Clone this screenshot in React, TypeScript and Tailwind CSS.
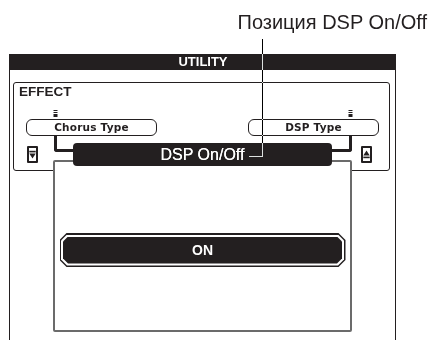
import React from "react";

function Indicator() {
  return (
    <svg width="5" height="7" viewBox="0 0 5 7" className="block">
      <rect x="0.5" y="0" width="4" height="1" fill="#231f20" />
      <rect x="0.5" y="2" width="4" height="1" fill="#231f20" />
      <rect x="0.5" y="4" width="4" height="3" fill="#231f20" />
    </svg>
  );
}

function ScrollButton({ up }: { up?: boolean }) {
  return (
    <div className="mt-[10px] w-[11px] h-[17px] border-2 border-[#231f20] rounded-[1px] flex items-center justify-center">
      <svg width="7" height="13" viewBox="0 0 7 13" className="block">
        {up ? (
          <>
            <polygon points="3.5,2.5 0.3,7.5 6.7,7.5" fill="#231f20" />
            <rect x="0.3" y="8.6" width="6.4" height="1.6" fill="#231f20" />
          </>
        ) : (
          <>
            <rect x="0.3" y="2.8" width="6.4" height="1.6" fill="#231f20" />
            <polygon points="0.3,5.5 6.7,5.5 3.5,10.5" fill="#231f20" />
          </>
        )}
      </svg>
    </div>
  );
}

function Pill({ label }: { label: string }) {
  return (
    <div className="mt-[2px] w-[131px] h-[17px] border-[1.5px] border-[#231f20] rounded-[6px] flex items-center justify-center text-[10.5px] leading-[11px] font-bold font-['DejaVu_Sans',sans-serif] tracking-[0.2px] text-[#231f20]">
      {label}
    </div>
  );
}

export default function App() {
  return (
    <div className="relative w-[434px] h-[340px] overflow-hidden bg-white text-[#231f20] font-['Liberation_Sans',Arial,sans-serif]">
      <div className="h-[54px] pt-[10px] pr-[7px] text-right text-[20px] leading-[24px]">
        Позиция DSP On/Off
      </div>
      <div className="ml-[9px] w-[387px] flex flex-col">
        <div className="h-[16px] bg-[#231f20] text-white text-[13px] font-bold leading-[16px] text-center pl-[1px]">
          UTILITY
        </div>
        <div className="border-x border-[#231f20] h-[300px] pt-[12px]">
          <div className="ml-[3px] mr-[5px] border border-[#231f20] rounded-[3px] h-[89px]">
            <div className="pl-[5px] pt-[2px] text-[13.5px] leading-[13px] font-bold">EFFECT</div>
            <div className="mt-[12px] flex">
              <div className="ml-[12px]">
                <div className="ml-[27px]">
                  <Indicator />
                </div>
                <Pill label="Chorus Type" />
              </div>
              <div className="ml-auto mr-[10px]">
                <div className="ml-[100px]">
                  <Indicator />
                </div>
                <Pill label="DSP Type" />
              </div>
            </div>
            <div className="flex items-start">
              <div className="ml-[13px]">
                <ScrollButton />
              </div>
              <div className="ml-[16px] w-[19px] h-[16px] border-l-[3px] border-b-[3px] border-[#231f20] rounded-bl-[3px]" />
              <div className="relative z-20 mt-[7px] w-[259px] h-[23px] rounded-[4px] bg-[#231f20] text-white text-[16px] leading-[23px] text-center [text-shadow:0_0_0.4px_#fff]">
                DSP On/Off
              </div>
              <div className="w-[20px] h-[16px] border-r-[3px] border-b-[3px] border-[#231f20] rounded-br-[3px]" />
              <div className="ml-[9px]">
                <ScrollButton up />
              </div>
            </div>
          </div>
          <div className="relative z-10 -mt-[11px] ml-[43px] w-[299px] h-[172px] border-2 border-[#6b6b6b] rounded-[2px] bg-white pt-[71px]">
            <div className="mx-auto w-[286px] h-[34px] bg-[#231f20] p-[1.5px] [clip-path:polygon(7px_0,calc(100%_-_7px)_0,100%_7px,100%_calc(100%_-_7px),calc(100%_-_7px)_100%,7px_100%,0_calc(100%_-_7px),0_7px)]">
              <div className="w-full h-full bg-white p-[2px] [clip-path:polygon(6px_0,calc(100%_-_6px)_0,100%_6px,100%_calc(100%_-_6px),calc(100%_-_6px)_100%,6px_100%,0_calc(100%_-_6px),0_6px)]">
                <div className="w-full h-full bg-[#231f20] text-white text-[14px] font-bold flex items-center justify-center [clip-path:polygon(5px_0,calc(100%_-_5px)_0,100%_5px,100%_calc(100%_-_5px),calc(100%_-_5px)_100%,5px_100%,0_calc(100%_-_5px),0_5px)]">
                  ON
                </div>
              </div>
            </div>
          </div>
        </div>
      </div>
      <div className="absolute z-30 left-[262px] top-[39px] w-px h-[118px] bg-white mix-blend-difference" />
      <div className="absolute z-30 left-[249px] top-[156px] w-[13px] h-px bg-white mix-blend-difference" />
    </div>
  );
}
